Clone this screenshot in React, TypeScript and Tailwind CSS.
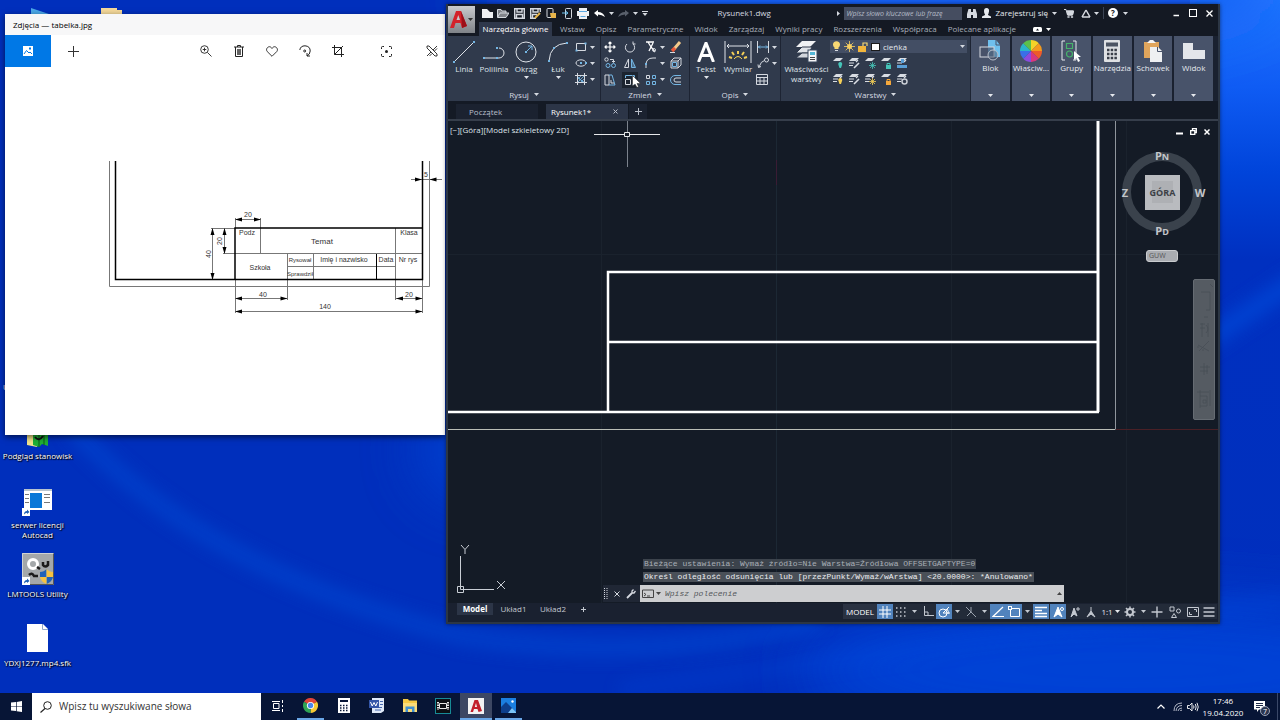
import React from "react";

type Kids = { children?: React.ReactNode };

function Ico({ s = 14, w, h, vb, children }: Kids & { s?: number; w?: number; h?: number; vb?: string }) {
  const ww = w ?? s;
  const hh = h ?? s;
  return (
    <svg width={ww} height={hh} viewBox={vb ?? `0 0 ${ww} ${hh}`} fill="none" stroke="currentColor" aria-hidden="true" className="block shrink-0">
      {children}
    </svg>
  );
}

function Caret() {
  return (
    <Ico w={5} h={3}>
      <path d="M0 0H5L2.500 3Z" fill="currentColor" stroke="none" />
    </Ico>
  );
}

function Btn({ label, className = "", children }: Kids & { label: string; className?: string }) {
  return (
    <button type="button" aria-label={label} title={label} className={`flex shrink-0 items-center justify-center ${className}`}>
      {children}
    </button>
  );
}

/* ---------- Wallpaper ---------- */

function Wallpaper() {
  return (
    <svg className="absolute inset-0 h-full w-full" viewBox="0 0 1280 720" preserveAspectRatio="none" aria-hidden="true">
      <defs>
        <filter id="b1" x="-30%" y="-60%" width="160%" height="220%"><feGaussianBlur stdDeviation="9" /></filter>
        <filter id="b2" x="-60%" y="-120%" width="220%" height="340%"><feGaussianBlur stdDeviation="30" /></filter>
        <linearGradient id="rt" x1="0" y1="0" x2="0" y2="1">
          <stop offset="0" stopColor="#2176ff" />
          <stop offset="0.12" stopColor="#0f5cf4" />
          <stop offset="0.24" stopColor="#0044da" />
          <stop offset="0.36" stopColor="#0030c0" />
          <stop offset="1" stopColor="#002fbc" />
        </linearGradient>
      </defs>
      <rect width="1280" height="720" fill="#002fbc" />
      <rect x="1190" width="90" height="720" fill="url(#rt)" />
      <ellipse cx="880" cy="-10" rx="400" ry="60" fill="#1560f4" filter="url(#b2)" />
      <ellipse cx="480" cy="450" rx="60" ry="50" fill="#0050e0" opacity="0.6" filter="url(#b2)" />
      <ellipse cx="1130" cy="670" rx="330" ry="70" fill="#0046dc" opacity="0.8" filter="url(#b2)" />
      <path d="M70 425Q200 570 460 636Q640 665 820 622" stroke="#0054de" strokeWidth="13" fill="none" opacity="0.55" filter="url(#b1)" />
      <path d="M1200 345L1300 278" stroke="#0054e4" strokeWidth="16" opacity="0.6" filter="url(#b1)" />
      <path d="M620 690Q900 650 1290 600" stroke="#0050e4" strokeWidth="10" fill="none" opacity="0.35" filter="url(#b1)" />
    </svg>
  );
}

/* ---------- Desktop icons ---------- */

function ShortcutArrow() {
  return (
    <g>
      <rect x="0" y="19" width="8" height="8" fill="#fff" />
      <path d="M2 25.500Q2 22 5 22V20.500L7.500 23L5 25V23.700Q3.500 23.700 2 25.500Z" fill="#1d5fb4" />
    </g>
  );
}

function DesktopItem({ label, children }: Kids & { label: string }) {
  return (
    <button type="button" className="flex h-[69px] w-[75px] flex-col items-center text-[8px] leading-[10px] text-white [text-shadow:1px_1px_1px_#000,0_0_2px_#000]">
      <span className="mb-1 flex h-8 items-end justify-center">{children}</span>
      <span className="text-center whitespace-pre">{label}</span>
    </button>
  );
}

function DesktopIcons() {
  return (
    <>
      <div className="absolute top-2 left-[31px] flex w-[91px] justify-between">
        <Ico w={18} h={8}><path d="M0 0L18 6V8H0Z" fill="#4aa8e8" stroke="none" /></Ico>
        <Ico w={21} h={8}><path d="M0 0H16V2H21V8H0Z" fill="#f4d89a" stroke="none" /></Ico>
      </div>
      <div className="absolute top-[346px] left-0 flex flex-col">
        <div className="flex h-[69px] flex-col justify-center pt-3 pl-[3px] text-[8px] leading-[10px] text-white">U</div>
        <DesktopItem label="Podgląd stanowisk">
          <Ico w={21} h={32}>
            <g stroke="none">
              <path d="M0 6L10 3V32L0 30Z" fill="#f2e38c" />
              <path d="M6 8H21V31L15 29L12 32L6 30Z" fill="#1fb035" />
              <path d="M12 12V32M17 10V30" stroke="#0a5a18" />
              <path d="M8 22Q12 27 16 21" stroke="#111" strokeWidth="2" fill="none" />
            </g>
          </Ico>
        </DesktopItem>
        <DesktopItem label={"serwer licencji\nAutocad"}>
          <Ico w={31} h={27}>
            <g stroke="none">
              <rect x="2" y="0" width="28" height="21" fill="#fff" />
              <rect x="2" y="0" width="28" height="2" fill="#b8c4cf" />
              <rect x="8" y="4" width="12" height="15" fill="#0a78d8" />
              <path d="M3 5.500H7M3 9.500H7M3 13.500H7M22 5.500H28M22 8.500H28M22 13.500H28" stroke="#777" />
              <ShortcutArrow />
            </g>
          </Ico>
        </DesktopItem>
        <DesktopItem label="LMTOOLS Utility">
          <Ico w={32} h={32}>
            <g stroke="none">
              <rect width="32" height="32" fill="#a4a8aa" />
              <path d="M0.500 31.500V0.500H31.500" stroke="#d0d2d3" />
              <path d="M31.500 0.500V31.500H0.500" stroke="#555" />
              <circle cx="11" cy="11" r="4.500" stroke="#fff" strokeWidth="3" fill="none" />
              <path d="M15 14L18 16M21 9V12Q23 15 26 12V8M7 22Q10 19 12 23H16" stroke="#1b1b1b" strokeWidth="2.500" fill="none" />
              <path d="M18 19Q22 19 24.500 16V24H18Z M24.500 24H31Q30 29 24.500 31Z" fill="#1f62b8" />
              <path d="M24.500 16Q27 19 31 19V24H24.500Z M18 24H24.500V31Q19 29 18 24Z" fill="#f5c242" />
              <g transform="translate(0 5)"><ShortcutArrow /></g>
            </g>
          </Ico>
        </DesktopItem>
        <DesktopItem label="YDXJ1277.mp4.sfk">
          <Ico w={21} h={30}>
            <g stroke="none">
              <path d="M0 0H16L21 5V28H0Z" fill="#fff" />
              <path d="M15.500 0V5.500H21" stroke="#8fa6c8" fill="none" />
            </g>
          </Ico>
        </DesktopItem>
      </div>
    </>
  );
}

/* ---------- Photos window ---------- */

function Arrow({ x, y, r }: { x: number; y: number; r: number }) {
  return <path d="M0 0L-7 -2V2Z" fill="#000" transform={`translate(${x} ${y}) rotate(${r})`} />;
}

function TitleBlockDrawing() {
  return (
    <svg viewBox="5 67 440 368" className="min-h-0 w-full flex-1" fontFamily="'Liberation Sans', Arial, sans-serif" fontSize="7" fill="#333" role="img" aria-label="tabelka">
      <g stroke="#777" fill="none">
        <path d="M109.500 161V286.500H429.500V161" />
        <path d="M235.500 218V228M260.500 218V253.500M235 253.500H422M287.500 253.500V300M313.500 254V280M287 266.500H396M395.500 228V300M211 228.500H235M223 253.500H235M235.500 280V313M422.500 280V313" />
        <path d="M235 219.500H260M212.500 228V280M224.500 228V253M235 298.500H287M396 298.500H422M235 311.500H422M411 179.500H442" />
      </g>
      <g stroke="#000" fill="none">
        <path d="M115.500 161V279.500H422.500V161" strokeWidth="1.500" />
        <path d="M235 280V228H422" strokeWidth="1.500" />
        <path d="M376.500 254V280" />
      </g>
      <Arrow x={235} y={219.500} r={180} /><Arrow x={261} y={219.500} r={0} />
      <Arrow x={212.500} y={228} r={-90} /><Arrow x={212.500} y={280} r={90} />
      <Arrow x={224.500} y={228} r={-90} /><Arrow x={224.500} y={254} r={90} />
      <Arrow x={235} y={298.500} r={180} /><Arrow x={287.500} y={298.500} r={0} />
      <Arrow x={396} y={298.500} r={180} /><Arrow x={422.500} y={298.500} r={0} />
      <Arrow x={235} y={311.500} r={180} /><Arrow x={422.500} y={311.500} r={0} />
      <Arrow x={422} y={179.500} r={0} /><Arrow x={429.500} y={179.500} r={180} />
      <g textAnchor="middle">
        <text x="248" y="217">20</text>
        <text x="247" y="235">Podz</text>
        <text x="322" y="244" fontSize="8">Temat</text>
        <text x="409" y="235">Klasa</text>
        <text x="260" y="270">Szkoła</text>
        <text x="300" y="262" fontSize="6">Rysował</text>
        <text x="300" y="276" fontSize="6">Sprawdził</text>
        <text x="344" y="262">Imię i nazwisko</text>
        <text x="386" y="262">Data</text>
        <text x="408" y="262">Nr rys</text>
        <text x="263" y="297">40</text>
        <text x="409" y="297">20</text>
        <text x="325" y="309">140</text>
        <text x="426" y="177">5</text>
        <text transform="translate(211 254) rotate(-90)">40</text>
        <text transform="translate(222 241) rotate(-90)">20</text>
      </g>
    </svg>
  );
}

function PhotosWindow() {
  return (
    <section aria-label="Zdjęcia" className="absolute top-[14px] left-[5px] flex h-[421px] w-[440px] flex-col bg-white text-black shadow-[0_2px_6px_rgba(0,0,0,0.6)]">
      <header className="flex h-[21px] items-center bg-[#f7f7f8] px-2 text-[8px]">Zdjęcia — tabelka.jpg</header>
      <div className="flex h-8 items-stretch">
        <Btn label="Kolekcja" className="w-[46px] bg-[#0078e6] text-white">
          <Ico w={10} h={10}>
            <rect width="10" height="10" fill="#fff" stroke="none" />
            <path d="M1 8L3.500 4.500L6 7L7 6L9 8" stroke="#0078e6" />
            <rect x="6" y="1.500" width="2" height="2" fill="#0078e6" stroke="none" />
          </Ico>
        </Btn>
        <Btn label="Dodaj" className="w-[45px] text-[#333]">
          <Ico s={11}><path d="M5.500 0V11M0 5.500H11" /></Ico>
        </Btn>
        <div className="ml-auto flex gap-4 text-[#222]">
          <div className="flex">
            <Btn label="Powiększ" className="w-[33px]">
              <Ico s={12}><circle cx="4.500" cy="4.500" r="3.800" strokeWidth="0.900" /><path d="M7.500 7.500L11.500 11.500M4.500 2.700V6.300M2.700 4.500H6.300" strokeWidth="0.900" /></Ico>
            </Btn>
            <Btn label="Usuń" className="w-[33px]">
              <Ico w={10} h={12}><path d="M0 2H10M3.500 2V0.500H6.500V2M1.500 2V11.500H8.500V2" /><path d="M4 4V10M6 4V10" strokeWidth="1.400" /></Ico>
            </Btn>
            <Btn label="Ulubione" className="w-[33px]">
              <Ico w={12} h={11}><path d="M6 10.300L1.200 5.500C-0.500 3.300 1.500 0.700 3.500 0.700C5 0.700 6 2.500 6 2.500C6 2.500 7 0.700 8.500 0.700C10.500 0.700 12.500 3.300 10.800 5.500Z" strokeWidth="0.900" /></Ico>
            </Btn>
            <Btn label="Obróć" className="w-[33px]">
              <Ico s={12}><path d="M0.800 5Q1.500 0.800 6 0.800Q11.200 1.200 11.200 6Q11 9.500 8 11M11 11H8V8" /><circle cx="5.700" cy="6" r="1" /></Ico>
            </Btn>
            <Btn label="Przytnij" className="w-[33px]">
              <Ico s={12}><path d="M2.500 0V9.500H12M0 2.500H9.500V12M2.500 9.500L11 1" /></Ico>
            </Btn>
          </div>
          <Btn label="Dopasuj" className="w-[33px]">
            <Ico s={11}><path d="M0.500 3V1.500Q0.500 0.500 1.500 0.500H3M8 0.500H9.500Q10.500 0.500 10.500 1.500V3M10.500 8V9.500Q10.500 10.500 9.500 10.500H8M3 10.500H1.500Q0.500 10.500 0.500 9.500V8" /><circle cx="5.500" cy="5.500" r="1.500" fill="currentColor" stroke="none" /></Ico>
          </Btn>
          <Btn label="Edytuj" className="w-[26px]">
            <Ico s={12}><path d="M1 1L3 1L11 9V11L9 11L1 3ZM11 1L7 5M5 7L1 11M11 3.500L8.500 6M6 8.500L3.500 11" strokeWidth="0.900" /></Ico>
          </Btn>
        </div>
      </div>
      <TitleBlockDrawing />
    </section>
  );
}

/* ---------- CAD: title bar and tabs ---------- */

function CadHeader() {
  return (
    <header className="flex h-8 bg-[#141923] text-[#d5d9e0]">
      <Btn label="Menu aplikacji" className="mt-[2px] h-[27px] w-[27px] gap-[1px] bg-gradient-to-b from-[#c9cbce] to-[#7f8388]">
        <Ico w={17} h={18}>
          <g stroke="none">
            <path d="M6 0H11L17 15L12 17L10.500 12H5.500L4 17H0Z" fill="#d3222a" />
            <path d="M8.300 4L10 9H6.500Z" fill="#c9cbce" />
            <path d="M11 0L17 15L12 17Z" fill="#9c1019" />
          </g>
        </Ico>
        <span className="text-[#333]"><Caret /></span>
      </Btn>
      <div className="flex min-w-0 flex-1 flex-col">
        <div className="flex h-[18px] items-center">
          <div className="flex items-center pl-1">
            <Btn label="Nowy" className="w-4"><Ico w={11} h={10}><path d="M0 1H5L8 4H11V10H0Z" fill="#eef0f3" stroke="none" /></Ico></Btn>
            <Btn label="Otwórz" className="w-4"><Ico w={12} h={10}><path d="M0.500 9V1.500H4L5 3H9V5M0.500 9.500L3 5H12L9 9.500Z" fill="#eef0f3" fillOpacity="0.500" /></Ico></Btn>
            <Btn label="Zapisz" className="w-4"><Ico s={11}><path d="M0.700 0.700H10.300V10.300H0.700ZM3 0.700V4H8V0.700M2.500 10V6.500H8.500V10" strokeWidth="1.400" /></Ico></Btn>
            <Btn label="Zapisz jako" className="w-4"><Ico s={11}><path d="M6 10.300H0.700V0.700H10.300V4M3 0.700V4H8V0.700M2.500 10V6.500H7" strokeWidth="1.400" /><path d="M5 10L10 5" stroke="#e8b54a" strokeWidth="2" /></Ico></Btn>
            <Btn label="Otwórz z urządzenia" className="w-4"><Ico s={11}><rect x="1" y="0.500" width="6" height="9" rx="1" /><path d="M4 5H10V10H5Z" fill="#e8b54a" stroke="none" /></Ico></Btn>
            <Btn label="Zapisz na urządzeniu" className="w-4"><Ico s={11}><rect x="3.500" y="0.500" width="6" height="10" rx="1" /><path d="M0 5H5M3.500 3L6 5L3.500 7" stroke="#6fc3f0" /></Ico></Btn>
            <Btn label="Drukuj" className="w-4"><Ico w={12} h={11}><path d="M2 0H10V3H12V8H10V11H2V8H0V3H2Z" fill="#eef0f3" stroke="none" /><path d="M2 3.500H10M3.500 8.500H8.500" stroke="#5aa7e0" /></Ico></Btn>
            <Btn label="Cofnij" className="w-4"><Ico w={11} h={7}><path d="M0 3L4 0V2Q9 2 11 7Q8 4.500 4 4.500V6.500Z" fill="#fff" stroke="none" /></Ico></Btn>
            <Btn label="Lista cofania" className="w-2"><Caret /></Btn>
            <Btn label="Ponów" className="w-4 text-[#59606c]"><Ico w={11} h={7}><path d="M11 3L7 0V2Q2 2 0 7Q3 4.500 7 4.500V6.500Z" fill="currentColor" stroke="none" /></Ico></Btn>
            <Btn label="Lista ponawiania" className="w-2"><Caret /></Btn>
            <Btn label="Dostosuj pasek" className="w-3"><Ico w={6} h={5}><path d="M0 0.500H6" /><path d="M0.500 2H5.500L3 5Z" fill="currentColor" stroke="none" /></Ico></Btn>
          </div>
          <h1 className="flex-1 text-center text-[8px]">Rysunek1.dwg</h1>
          <div className="flex items-center gap-1">
            <Ico w={3} h={5}><path d="M0 0L3 2.500L0 5Z" fill="currentColor" stroke="none" /></Ico>
            <input aria-label="Szukaj" placeholder="Wpisz słowo kluczowe lub frazę" className="h-[13px] w-[118px] bg-[#454d60] px-[2px] text-[7px] italic placeholder:text-[#b4bac5]" />
            <Btn label="Wyszukaj" className="w-3"><Ico w={10} h={9}><path d="M0 5L1.500 0H4V3H6V0H8.500L10 5V9H6V6H4V9H0Z" fill="currentColor" stroke="none" /></Ico></Btn>
            <button type="button" className="flex items-center gap-1 text-[8px] whitespace-nowrap text-[#e6e9ee]">
              <Ico w={9} h={10}><path d="M4.500 0Q7.500 0 7 3.500Q6.500 6 6 6.500V7L9 8.500V10H0V8.500L3 7V6.500Q2 5 2 3Q2 0 4.500 0Z" fill="currentColor" stroke="none" /></Ico>
              Zarejestruj się
            </button>
            <Btn label="Menu konta"><Caret /></Btn>
            <Btn label="Sklep" className="w-4"><Ico w={10} h={9}><path d="M0 0.500H2L3.500 6H8.500L9.500 2H3" /><path d="M3 2H9.500L8.500 6H3.800Z" fill="currentColor" /><circle cx="4.500" cy="8" r="0.800" /><circle cx="8" cy="8" r="0.800" /></Ico></Btn>
            <Btn label="Autodesk" className="gap-[3px]"><Ico w={10} h={9}><path d="M5 1L9 8M5 1L1 8M1 8H9" strokeWidth="1.500" /></Ico><Caret /></Btn>
            <span className="h-3 w-px bg-[#3b4454]" />
            <Btn label="Pomoc" className="gap-[5px]">
              <span className="flex h-[10px] w-[10px] items-center justify-center rounded-full bg-white text-[8px] font-bold text-[#141923]">?</span>
              <Caret />
            </Btn>
          </div>
          <div className="ml-10 flex items-center text-white">
            <Btn label="Minimalizuj" className="w-4"><Ico s={8}><path d="M1.500 6.500H7" strokeWidth="1.500" /></Ico></Btn>
            <Btn label="Maksymalizuj" className="w-[17px]"><Ico s={8}><rect x="0.500" y="0.500" width="7" height="7" /></Ico></Btn>
            <Btn label="Zamknij" className="mr-px w-4"><Ico s={7}><path d="M0.500 0.500L6.500 6.500M6.500 0.500L0.500 6.500" strokeWidth="1.300" /></Ico></Btn>
          </div>
        </div>
        <nav className="flex h-[14px] items-center pl-1 text-[8px] whitespace-nowrap text-[#a9afba]">
          <button type="button" className="mr-2 h-full w-[73px] bg-[#2f384b] text-white">Narzędzia główne</button>
          <div className="flex gap-[11px]">
            {["Wstaw", "Opisz", "Parametryczne", "Widok", "Zarządzaj", "Wyniki pracy", "Rozszerzenia", "Współpraca", "Polecane aplikacje"].map((t) => (
              <button type="button" key={t}>{t}</button>
            ))}
          </div>
          <Btn label="Zwiń wstążkę" className="ml-[17px] gap-1 text-white">
            <Ico w={9} h={5}><rect width="9" height="5" rx="1.500" fill="currentColor" stroke="none" /><path d="M3 3.500H6L4.500 1.500Z" fill="#141923" stroke="none" /></Ico>
            <Caret />
          </Btn>
        </nav>
      </div>
    </header>
  );
}

/* ---------- CAD: ribbon ---------- */

const B = "#74b6e4";

function BigTool({ label, caret, className = "", children }: Kids & { label: string; caret?: boolean; className?: string }) {
  return (
    <button type="button" className={`flex shrink-0 flex-col items-center text-[8px] leading-[10px] text-[#dfe3e9] ${className}`}>
      <span className="flex h-[25px] items-center justify-center">{children}</span>
      <span className="whitespace-pre">{label}</span>
      {caret && <span className="mt-[2px]"><Caret /></span>}
    </button>
  );
}

function Panel({ title, className = "", children }: Kids & { title: string; className?: string }) {
  return (
    <section className={`flex shrink-0 flex-col border-r border-[#1d2433] bg-[#303a4c] text-[#d5d9e0] ${className}`}>
      <div className="flex flex-1 pt-[3px]">{children}</div>
      <button type="button" className="flex h-[13px] items-center justify-center gap-[5px] text-[8px]">{title}<Caret /></button>
    </section>
  );
}

function Small({ label, caret, active, children }: Kids & { label: string; caret?: boolean; active?: boolean }) {
  return (
    <Btn label={label} className={`h-4 ${caret ? "w-[26px] gap-[3px]" : "w-4"} ${active ? "bg-[#1c2430]" : ""}`}>
      <Ico s={12}>{children}</Ico>
      {caret && <Caret />}
    </Btn>
  );
}

const sheet = "M4 1H11L8 4H1Z";

function LayerTool({ label, mark, stack, badge }: { label: string; mark: string; stack?: boolean; badge: React.ReactNode }) {
  return (
    <Small label={label}>
      <path d={sheet} fill="#d9dde3" stroke="none" />
      {stack && <path d="M1 6H6M1 8.500H5M10 3L8 5" stroke="#d9dde3" strokeWidth="1.200" />}
      <g stroke={mark} fill={mark}>{badge}</g>
    </Small>
  );
}

const bulb = <path d="M6.500 8A2 2 0 1 1 10 8L9 11H7.500Z" stroke="none" />;
const pen = <path d="M6 11L11 6" fill="none" strokeWidth="1.600" />;
const sun = <path d="M8.500 5V12M5 8.500H12M6 6L11 11M11 6L6 11" fill="none" strokeWidth="0.800" />;
const lock = <><rect x="6" y="8" width="5" height="4" stroke="none" /><path d="M7 8V6.500H10V8" fill="none" /></>;
const ring = <circle cx="8.500" cy="8.500" r="2.500" fill="none" strokeWidth="1.500" />;

function Collapsed({ title, children }: Kids & { title: string }) {
  return (
    <button type="button" className="flex min-w-0 flex-1 flex-col items-center bg-[#48536a] pt-[2px] pb-1 text-[8px] leading-[10px] text-[#e6e9ee]">
      <span className="flex h-[25px] items-center">{children}</span>
      <span>{title}</span>
      <span className="mt-auto"><Caret /></span>
    </button>
  );
}

function Ribbon() {
  const sq = (x: number, y: number) => <rect x={x - 1} y={y - 1} width="2" height="2" fill={B} stroke="none" />;
  const wedge = ["#f5d327", "#f39a1e", "#ee5a2a", "#d9377d", "#8b4be0", "#3a6fe8", "#2bb5c9", "#5cc04a"];
  return (
    <div className="flex h-[65px] bg-[#1a2130]">
      <Panel title="Rysuj" className="w-[153px]">
        <BigTool label="Linia" className="w-8"><Ico s={22}><path d="M1 21L21 1" />{sq(1, 21)}{sq(21, 1)}</Ico></BigTool>
        <BigTool label="Polilinia" className="w-7"><Ico s={22}><path d="M1 17H16A5 5 0 0 0 16 7" />{sq(1, 17)}{sq(14, 17)}{sq(14, 7)}</Ico></BigTool>
        <BigTool label="Okrąg" caret className="w-9"><Ico s={22}><circle cx="11" cy="11" r="10" /><path d="M11 11L17 5M13 5H17V9" stroke={B} />{sq(11, 11)}</Ico></BigTool>
        <BigTool label="Łuk" caret className="w-7"><Ico s={22}><path d="M2 20Q3 3 20 2" />{sq(2, 20)}{sq(7, 7)}{sq(20, 2)}</Ico></BigTool>
        <div className="flex flex-col">
          <Small label="Prostokąt" caret><path d="M1.500 2.500H10.500V9.500H1.500Z" />{sq(1.5, 9.5)}{sq(10.5, 2.5)}</Small>
          <Small label="Elipsa" caret><ellipse cx="6" cy="6" rx="5" ry="3.200" />{sq(6, 6)}{sq(11, 6)}</Small>
          <Small label="Kreskowanie" caret><path d="M2.500 0V12M9.500 0V12M0 2.500H12M0 9.500H12" /><path d="M3 6L6 3M3 9L9 3M6 9L9 6M4 6L9 9M3 4L8 9" stroke={B} strokeWidth="0.800" /></Small>
        </div>
      </Panel>
      <Panel title="Zmień" className="w-[89px]">
        <div className="ml-px grid grid-cols-[20px_20px_26px_20px]">
          <Small label="Przesuń"><path d="M6 1V11M1 6H11M4.500 2.500L6 1L7.500 2.500M4.500 9.500L6 11L7.500 9.500M2.500 4.500L1 6L2.500 7.500M9.500 4.500L11 6L9.500 7.500" stroke="#fff" strokeWidth="1.200" /></Small>
          <Small label="Obrót"><path d="M3 3A4.600 4.600 0 1 0 9 3M9 3V0.500M9 3H11.500" /></Small>
          <Small label="Utnij" caret><path d="M1 1H9M3 1L6 6L10 11M8 2L6 6L4 10" stroke="#fff" strokeWidth="1.300" /><circle cx="9" cy="9" r="1.500" /></Small>
          <Small label="Wymaż"><path d="M4 8L10 1" stroke="#f3c98b" strokeWidth="3" /><path d="M2 10L5 7" stroke="#e8583a" strokeWidth="3.500" /><path d="M0 11.500H5" /></Small>
          <Small label="Kopiuj"><circle cx="2.500" cy="2.500" r="1.700" /><circle cx="4" cy="8.500" r="2" stroke={B} /><circle cx="9.500" cy="8.500" r="2" stroke={B} /><path d="M6 2.500H9.500V5M8 4L9.500 5.500L11 4" /></Small>
          <Small label="Lustro"><path d="M4.500 2V10.500H0.500Z" /><path d="M7.500 2V10.500H11.500Z" stroke={B} fill={B} fillOpacity="0.400" /></Small>
          <Small label="Zaokrąglij" caret><path d="M1 11V8Q1 1 8 1H11" />{sq(1, 7)}</Small>
          <Small label="Rozbij"><path d="M1 4H8V11H1ZM1 4L4 1H11V8L8 11M8 4L11 1" /><path d="M2.500 5.500H6.500V9.500H2.500Z" stroke={B} /></Small>
          <Small label="Rozciągnij"><path d="M1 1H5V11H1Z" /><path d="M5 1H8L11 11H5" stroke={B} /><path d="M7 6V9H10" /></Small>
          <Small label="Skala" active><path d="M1.500 5.500H6.500V10.500H1.500Z" /><path d="M1.500 4V1.500H10.500V10.500H8" stroke={B} /></Small>
          <Small label="Szyk" caret><path d="M1.500 1.500H4.500V4.500H1.500Z" /><path d="M7.500 1.500H10.500V4.500H7.500ZM1.500 7.500H4.500V10.500H1.500ZM7.500 7.500H10.500V10.500H7.500Z" stroke={B} /></Small>
          <Small label="Odsunięcie"><path d="M11 1.500H5A4.500 4.500 0 0 0 5 10.500H11" stroke={B} /><path d="M11 4H6A2 2 0 0 0 6 8H11" /></Small>
        </div>
      </Panel>
      <Panel title="Opis" className="w-[91px]">
        <BigTool label="Tekst" caret className="w-8"><Ico w={18} h={20}><path d="M1.500 20L9 1L16.500 20M4 13.500H14" stroke="#fff" strokeWidth="3" /></Ico></BigTool>
        <BigTool label="Wymiar" className="w-8"><Ico w={28} h={22}><path d="M1 0V22M27 0V22M3 5H25M5 3L3 5L5 7M23 3L25 5L23 7" /><path d="M8 17L5 16M10 14L8 11M14 13V10M18 14L20 11M20 17L23 16" stroke="#f5cf57" strokeWidth="2" /><path d="M10 18Q14 13 18 18" stroke="#f5cf57" /></Ico></BigTool>
        <div className="flex flex-col">
          <Small label="Liniowy" caret><path d="M0.500 0V12M11.500 0V12" /><path d="M1 6H11M3 4.500L1.500 6L3 7.500M9 4.500L10.500 6L9 7.500" stroke={B} /></Small>
          <Small label="Linia odniesienia" caret><circle cx="9.500" cy="3" r="2" /><path d="M7.500 3.500Q4 4 2 10M1 7.500L1.500 10.500L4 9.500" /></Small>
          <Small label="Tabela"><path d="M0.500 1.500H11.500V11.500H0.500ZM0.500 4.500H11.500M0.500 8H11.500M4 4V11M8 4V11" /></Small>
        </div>
      </Panel>
      <Panel title="Warstwy" className="w-[190px]">
        <BigTool label={"Właściwości\nwarstwy"} className="ml-1 w-[43px]">
          <Ico s={23}><g stroke="none"><path d="M7 1H21L15 7H1Z" fill="#f1f2f4" /><path d="M7 7H17L14 13H1Z" fill="#e0e3e8" stroke="#303a4c" /><path d="M7 13H14V18H1Z" fill="#d2d6dc" stroke="#303a4c" /><rect x="13" y="10" width="9" height="12" fill="#f4f6f8" stroke="#39495e" /><rect x="15" y="12" width="5" height="3" fill="#54b7d6" /><path d="M15 17.500H20M15 19.500H20" stroke="#444" /></g></Ico>
        </BigTool>
        <div className="flex flex-col pt-px pl-[2px]">
          <div className="flex h-[13px] w-[137px] items-center gap-[3px] bg-[#434e64] px-[2px]">
            <Ico w={9} h={11}><path d="M2.500 8V6.500A3.500 3.500 0 1 1 6.500 6.500V8Z" fill="#f7d774" stroke="none" /><path d="M3 9.500H6" /></Ico>
            <Ico s={11}><circle cx="5.500" cy="5.500" r="2.500" fill="#f7cf62" stroke="none" /><path d="M5.500 0V11M0 5.500H11M1.700 1.700L9.300 9.300M9.300 1.700L1.700 9.300" stroke="#f7cf62" strokeWidth="0.800" /></Ico>
            <Ico s={10}><rect x="0" y="4" width="8" height="6" fill="#f2b63c" stroke="none" /><path d="M5 4V1H9V4" stroke="#f7d774" strokeWidth="1.200" /></Ico>
            <span className="h-2 w-[9px] shrink-0 border border-[#1a1a1a] bg-white" />
            <select aria-label="Warstwa" className="min-w-0 flex-1 appearance-none bg-transparent text-[8px] leading-[13px] text-[#e6e9ee]">
              <option>cieńka</option>
            </select>
            <span className="pointer-events-none"><Caret /></span>
          </div>
          <div className="mt-[2px] grid w-20 grid-cols-5">
            <LayerTool label="Wyłącz" mark="#45c4b8" badge={bulb} />
            <LayerTool label="Izoluj" mark="#d9dde3" stack badge={pen} />
            <LayerTool label="Zablokuj wyświetlanie" mark="#45c4b8" badge={sun} />
            <LayerTool label="Zablokuj" mark="#45c4b8" badge={lock} />
            <LayerTool label="Ustaw aktualną" mark="#5a9fd6" stack badge={<path d="M1 8H11V11H1ZM5 2H8V6H5Z" stroke="none" />} />
            <LayerTool label="Włącz" mark="#f5cf57" stack badge={bulb} />
            <LayerTool label="Cofnij izolację" mark="#d9dde3" stack badge={pen} />
            <LayerTool label="Odmroź" mark="#f5cf57" stack badge={sun} />
            <LayerTool label="Odblokuj" mark="#f5a83c" badge={lock} />
            <LayerTool label="Dopasuj warstwę" mark="#c9cdd4" stack badge={ring} />
          </div>
        </div>
      </Panel>
      <div className="mr-[5px] flex min-w-0 flex-1 gap-[2px]">
        <Collapsed title="Blok"><Ico s={22}><g stroke="none"><path d="M9 0H17L21 5V17H9Z" fill="#6fc0ee" /><rect x="1" y="7" width="14" height="10" fill="#48536a" fillOpacity="0.700" stroke="#d5d9e0" /><circle cx="14" cy="15" r="5" fill="#48536a" fillOpacity="0.500" stroke="#b9bfca" /><path d="M17 0V5H21" stroke="#48536a" fill="none" /></g></Ico></Collapsed>
        <Collapsed title="Właściw...">
          <Ico s={22}>
            {wedge.map((c, i) => (
              <path key={c} d="M11 11L11 0A11 11 0 0 1 18.780 3.220Z" fill={c} stroke="none" transform={`rotate(${i * 45} 11 11)`} />
            ))}
          </Ico>
        </Collapsed>
        <Collapsed title="Grupy"><Ico s={22}><path d="M4 1H1V20H4M12 1H15V20H12" /><path d="M5.500 3.500H11.500V8.500H5.500Z" stroke="#47b36b" strokeWidth="1.200" /><circle cx="8.500" cy="14" r="3" stroke="#47b36b" strokeWidth="1.200" /><path d="M13 11L20 17H17L19 21L17 22L15.500 18L13 20Z" fill="#fff" stroke="none" /></Ico></Collapsed>
        <Collapsed title="Narzędzia"><Ico w={16} h={22}><rect width="16" height="22" rx="1" fill="#dfe1e4" stroke="none" /><rect x="2" y="2.500" width="12" height="4" fill="#4d5564" stroke="none" /><path d="M3 10H13M3 14H13M3 18H13" stroke="#3a3f49" strokeWidth="2.500" strokeDasharray="2.500 1.200" /></Ico></Collapsed>
        <Collapsed title="Schowek"><Ico w={18} h={22}><g stroke="none"><path d="M0 2H15V18H0Z" fill="#e0a55c" /><path d="M3 3L6 0H9L12 3Z" fill="#f4f4f4" /><path d="M6 7H14L18 11V22H6Z" fill="#eef0f2" /><path d="M13.500 7V11.500H18" stroke="#48536a" fill="none" /></g></Ico></Collapsed>
        <Collapsed title="Widok"><Ico w={22} h={16}><path d="M0 0H10V7H22V16H0Z" fill="#e4e6ea" stroke="none" /></Ico></Collapsed>
      </div>
    </div>
  );
}

function FileTabs() {
  return (
    <nav className="flex h-5 items-end border-b-2 border-[#363e4b] bg-[#141a25] pl-2 text-[8px] text-[#b9bfca]">
      <button type="button" className="h-[15px] w-[82px] bg-[#1b2230] pl-[13px] text-left">Początek</button>
      <div className="ml-2 flex h-[15px] w-[82px] items-center justify-between bg-[#2c3547] pr-[10px] pl-[5px] text-white">
        <button type="button">Rysunek1*</button>
        <Btn label="Zamknij kartę" className="text-[#b9bfca]"><Ico s={5}><path d="M0.500 0.500L4.500 4.500M4.500 0.500L0.500 4.500" /></Ico></Btn>
      </div>
      <Btn label="Nowa karta" className="ml-px h-[15px] w-[18px] bg-[#1b2230]"><Ico s={7}><path d="M3.500 0V7M0 3.500H7" /></Ico></Btn>
    </nav>
  );
}

/* ---------- CAD: drawing area ---------- */

function Drawing() {
  return (
    <svg className="absolute inset-0 h-full w-full" fill="none" aria-hidden="true">
      <g transform="translate(-448 -121)">
        <path d="M601.500 121V610M951.500 121V610M1126.500 121V610M448 254.500H1218" stroke="#1a222d" />
        <path d="M776.500 121V610" stroke="#1c2834" />
        <path d="M776.500 160V185" stroke="#3a1c34" />
        <path d="M1116 429.500H1218" stroke="#4a2026" />
        <path d="M1115.500 121V429.500" stroke="#8f959c" />
        <path d="M448 429.500H1115" stroke="#b9bdb6" />
        <g stroke="#fff" strokeWidth="2.500">
          <path d="M1098 121V412" strokeWidth="3" />
          <path d="M448 412H1099M608 412V272H1098M608 342H1098" />
        </g>
        <g stroke="#e6e8ea">
          <path d="M594 134.500H624M630 134.500H660M624.500 132.500H629.500V136.500H624.500Z" />
          <path d="M627.500 121V132M627.500 137V167" stroke="#7b828c" />
          <path d="M460.500 556V589.500H494M457.500 586.500H463.500V592.500H457.500Z" stroke="#c9ced5" />
          <path d="M461 545L465 549.500L469 545M465 549.500V554M497 581L505 589M505 581L497 589" stroke="#c9ced5" />
        </g>
      </g>
    </svg>
  );
}

function ViewCube() {
  return (
    <div className="flex w-[90px] flex-col items-center">
      <svg width="90" height="96" viewBox="0 0 90 96" role="img" aria-label="ViewCube" fontFamily="'Open Sans', sans-serif" fontWeight="bold" fontSize="11" fill="#c3c6ca" textAnchor="middle">
        <circle cx="44" cy="46" r="35.500" stroke="#3a424c" strokeWidth="9" fill="none" />
        <rect x="27" y="29" width="35" height="35" fill="#b9bbbf" />
        <rect x="34" y="35" width="21" height="22" fill="#aeb0b4" />
        <text x="44.500" y="50" fontSize="9" fill="#3c4046">GÓRA</text>
        <text x="44" y="14">P<tspan fontSize="9">N</tspan></text>
        <text x="44" y="89">P<tspan fontSize="9">D</tspan></text>
        <text x="7" y="51">Z</text>
        <text x="82" y="51">W</text>
      </svg>
      <button type="button" className="mt-2 mr-[2px] h-3 w-8 rounded-[3px] border border-[#c9cbce] bg-[#a9acb1] pl-[2px] text-left text-[7px] leading-[10px] text-[#555]">GUW</button>
    </div>
  );
}

function NavBar() {
  return (
    <div className="h-[141px] w-[22px] rounded-[2px] border border-[#666c73] bg-[#555b62] text-[#484e55]">
      <Ico w={20} h={139} vb="1 1 20 139">
        <path d="M17 5L20 8M8 13H17V31H13M11 38H15M7 45H12M7 49H12M9 44V58M13 46Q17 50 13 54M15 44V58M5 66L16 72M16 62L6 72M4 68H6M9 71H11M7 88H17M11 84V96M7 92H15M14 86V95M7 111V129M7 117H14V127H7M10 121H13V124H10ZM17 111V127M4 113H16" strokeWidth="0.800" />
      </Ico>
    </div>
  );
}

function CommandLine() {
  return (
    <div className="absolute bottom-px left-[155px] flex w-[461px] flex-col items-start font-['Liberation_Mono',monospace] text-[8px]">
      <div className="ml-10 flex flex-col items-start gap-[3px] pb-[3px] leading-[10px] whitespace-nowrap">
        <p className="bg-[#3c434c] px-px text-[#aab0b7]">Bieżące ustawienia: Wymaż źródło=Nie Warstwa=Źródłowa OFFSETGAPTYPE=0</p>
        <p className="bg-[#4a5058] px-px text-[#eceef0]">Określ odległość odsunięcia lub [przezPunkt/Wymaż/wArstwa] &lt;20.0000&gt;: *Anulowano*</p>
      </div>
      <div className="flex h-[17px] w-full items-center text-[#d5d9e0]">
        <div className="flex h-full w-[37px] shrink-0 items-center justify-between bg-[#202735] pr-1 pl-px">
          <Ico w={4} h={12}><path d="M0.500 0V12M3 0V12" strokeDasharray="1 1" /></Ico>
          <Btn label="Zamknij wiersz poleceń"><Ico s={6}><path d="M0.500 0.500L5.500 5.500M5.500 0.500L0.500 5.500" /></Ico></Btn>
          <Btn label="Dostosuj"><Ico s={10}><path d="M1 9L6 4" strokeWidth="1.800" /><path d="M9.500 2L8 4H6V2L7.500 0.500" strokeWidth="1.300" /></Ico></Btn>
        </div>
        <label className="flex h-full min-w-0 flex-1 items-center gap-[2px] bg-[#cdced0] px-[2px] text-[#444]">
          <Ico w={12} h={9}><path d="M0.500 1H11.500V8.500H0.500Z" /><path d="M2 4L4 5.500L2 7M5 7H8" /></Ico>
          <Caret />
          <input aria-label="Polecenie" placeholder="Wpisz polecenie" className="min-w-0 flex-1 bg-transparent pl-[2px] italic placeholder:text-[#55585c]" />
          <Ico w={5} h={3}><path d="M0 3H5L2.500 0Z" fill="currentColor" stroke="none" /></Ico>
        </label>
      </div>
    </div>
  );
}

function Canvas() {
  return (
    <div className="relative min-h-0 flex-1 overflow-hidden bg-[#141b26] text-[#dfe3e9]">
      <Drawing />
      <div className="absolute inset-0 flex items-start justify-between">
        <p className="pt-[3px] pl-[2px] text-[8px]">[−][Góra][Model szkieletowy 2D]</p>
        <div className="flex flex-col items-end">
          <div className="mr-2 flex h-[21px] items-center gap-[7px] text-white">
            <Btn label="Minimalizuj rysunek"><Ico s={7}><path d="M0 5.500H7" strokeWidth="2" /></Ico></Btn>
            <Btn label="Przywróć rysunek"><Ico s={7}><path d="M0.700 2.700H4.800V6.300H0.700ZM2.500 2.500V0.700H6.300V4.500H5" strokeWidth="1.300" /></Ico></Btn>
            <Btn label="Zamknij rysunek"><Ico s={6}><path d="M0.500 0.500L5.500 5.500M5.500 0.500L0.500 5.500" strokeWidth="1.500" /></Ico></Btn>
          </div>
          <div className="mt-1 mr-[10px]"><ViewCube /></div>
          <div className="mt-[17px] mr-[3px]"><NavBar /></div>
        </div>
      </div>
      <CommandLine />
    </div>
  );
}

/* ---------- CAD: status bar ---------- */

function Cell({ label, on, children }: Kids & { label: string; on?: boolean }) {
  return (
    <Btn label={label} className={`h-[15px] w-4 ${on ? "bg-[#5183bd] text-white" : ""}`}>
      <Ico s={12}>{children}</Ico>
    </Btn>
  );
}

function CaretCell({ label }: { label: string }) {
  return <Btn label={label} className="h-[15px] w-[11px]"><Caret /></Btn>;
}

function StatusBar() {
  return (
    <footer className="flex h-[19px] items-start justify-between bg-[#1a2130] text-[8px] text-[#c3c8d0]">
      <nav className="flex h-full items-start pl-[9px]">
        <button type="button" className="h-3 w-9 bg-[#2c3547] leading-3 font-bold text-white">Model</button>
        <button type="button" className="h-3 w-[41px] leading-3">Układ1</button>
        <button type="button" className="h-3 w-[38px] leading-3">Układ2</button>
        <Btn label="Nowy układ" className="h-3 w-[22px]"><Ico s={5}><path d="M2.500 0V5M0 2.500H5" /></Ico></Btn>
      </nav>
      <div className="mt-px mr-px flex items-center bg-[#232b39]">
        <button type="button" className="h-[15px] w-[34px] bg-[#2a3242] text-white">MODEL</button>
        <Cell label="Siatka" on><path d="M4 0V12M8 0V12M0 4H12M0 8H12" /></Cell>
        <Cell label="Skok"><path d="M1 2H12M1 6H12M1 10H12" strokeWidth="1.500" strokeDasharray="1.500 2.500" /></Cell>
        <CaretCell label="Ustawienia skoku" />
        <Cell label="Orto"><path d="M2.500 0V9.500H12M2.500 6H6V9.500" /></Cell>
        <Cell label="Śledzenie biegunowe" on><circle cx="5" cy="7" r="4" /><path d="M5 7H12M5 7L11 1M9 3Q11 5 10 8" /></Cell>
        <CaretCell label="Kąty biegunowe" />
        <Cell label="Izometria"><path d="M1 1L11 11M6 1V6L2 10" stroke="#9aa2ae" /></Cell>
        <CaretCell label="Płaszczyzna izometryczna" />
        <Cell label="Śledzenie odniesienia" on><path d="M11 1L1 10.500H12" strokeWidth="1.200" /></Cell>
        <Cell label="Odniesienie do obiektów" on><path d="M3.500 2.500H11.500V10.500H2.500V4" /><rect x="0.500" y="0.500" width="3" height="3" /></Cell>
        <CaretCell label="Ustawienia odniesienia" />
        <Cell label="Szerokość linii" on><path d="M0 1.500H12M0 4.500H7M0 7.500H12M0 10.500H12" strokeWidth="1.600" /></Cell>
        <span className="w-px" />
        <Cell label="Widoczność opisu" on><path d="M6 1L10 11L6 8L2 11Z" fill="currentColor" /><circle cx="10" cy="3" r="1.500" /></Cell>
        <span className="w-px" />
        <Cell label="Autoskala"><path d="M5 2L8 10L5 8L2 11Z" fill="currentColor" /><path d="M9 1V5M7 3H11" /></Cell>
        <Cell label="Opisowe"><path d="M6 1V5L10 11L6 8L2 11L6 5" fill="currentColor" /></Cell>
        <button type="button" className="flex h-[15px] w-[23px] items-center justify-center gap-[2px] text-[#e6e9ee]">1:1 <Caret /></button>
        <Cell label="Obszar roboczy"><circle cx="6" cy="6" r="3" strokeWidth="2" /><path d="M6 0.500V3M6 9V11.500M0.500 6H3M9 6H11.500M2 2L4 4M8 8L10 10M10 2L8 4M4 8L2 10" strokeWidth="1.500" /></Cell>
        <CaretCell label="Lista obszarów" />
        <Cell label="Monitor"><path d="M6 0.500V11.500M0.500 6H11.500" strokeWidth="1.400" /></Cell>
        <span className="w-[2px]" />
        <Cell label="Izolacja obiektów"><path d="M1 1H5V5H1Z" /><circle cx="9.500" cy="5" r="2" /><path d="M5 7.500L7.500 11.500H2.500Z" /></Cell>
        <span className="w-[2px]" />
        <Cell label="Pełny ekran"><path d="M0.500 1.500H11.500V10.500H0.500Z" /><path d="M7 3.500H9.500V6M2.500 6V8.500H5" /></Cell>
        <Cell label="Dostosowanie"><path d="M0.500 2H11.500M0.500 6H11.500M0.500 10H11.500" strokeWidth="1.400" /></Cell>
      </div>
    </footer>
  );
}

function CadWindow() {
  return (
    <section aria-label="Rysunek1.dwg" className="absolute top-1 right-[60px] bottom-[69px] left-[446px] flex flex-col overflow-hidden border-x-2 border-b-2 border-[#2c3644] shadow-[0_0_4px_rgba(0,0,0,0.5)]">
      <CadHeader />
      <Ribbon />
      <FileTabs />
      <Canvas />
      <StatusBar />
      <svg width="9" height="13" viewBox="0 0 9 13" aria-hidden="true" className="absolute top-[71px] left-[184px]">
        <path d="M0.500 0.500V11L3 9L5 12.500L6.500 11.500L5 8.500H8.500Z" fill="#fff" stroke="#222" strokeWidth="0.500" />
      </svg>
    </section>
  );
}

/* ---------- Taskbar ---------- */

function Task({ label, open, active, children }: Kids & { label: string; open?: boolean; active?: boolean }) {
  return (
    <Btn label={label} className="h-full w-[33px]">
      <span className={`flex h-full items-center justify-center border-b-2 ${active ? "w-8 bg-[#3c4763]" : "w-[27px]"} ${open ? "border-[#6aa7e8]" : "border-transparent"}`}>{children}</span>
    </Btn>
  );
}

function Taskbar() {
  return (
    <footer className="flex h-[27px] shrink-0 items-center bg-[#071536] text-white">
      <Btn label="Start" className="h-full w-8">
        <Ico s={11}><path d="M0 1.500L5 1V5.200H0ZM5.700 0.900L11 0V5.200H5.700ZM0 5.800H5V10L0 9.500ZM5.700 5.800H11V11L5.700 10.200Z" fill="#fff" stroke="none" /></Ico>
      </Btn>
      <label className="flex h-[27px] w-[229px] items-center gap-[7px] bg-white px-2 text-[#222]">
        <Ico s={12}><circle cx="7.500" cy="4.500" r="3.800" /><path d="M5 7.500L0.500 11.500" strokeWidth="1.200" /></Ico>
        <input aria-label="Wyszukiwanie" placeholder="Wpisz tu wyszukiwane słowa" className="min-w-0 flex-1 text-[10px] placeholder:text-[#333]" />
      </label>
      <Task label="Widok zadań"><Ico w={12} h={12}><path d="M0 1.500H8M0 10.500H8M1.500 3.500H7V8.500H1.500ZM10.500 0V3M10.500 5V7M10.500 9V12" /></Ico></Task>
      <Task label="Chrome" open>
        <Ico s={15}>
          <g stroke="none">
            <path d="M7.500 7.500L1 3.750A7.500 7.500 0 0 1 14 3.750Z" fill="#e0443a" />
            <path d="M7.500 7.500L14 3.750A7.500 7.500 0 0 1 7.500 15Z" fill="#f7c934" />
            <path d="M7.500 7.500L7.500 15A7.500 7.500 0 0 1 1 3.750Z" fill="#2fa455" />
            <circle cx="7.500" cy="7.500" r="3.600" fill="#fff" /><circle cx="7.500" cy="7.500" r="2.700" fill="#4a87ee" />
          </g>
        </Ico>
      </Task>
      <Task label="Kalkulator"><Ico w={12} h={15}><rect width="12" height="15" fill="#fff" stroke="none" /><path d="M2 3H10" stroke="#071536" strokeWidth="2" /><path d="M2 7.500H11M2 10H11M2 12.500H11" stroke="#071536" strokeWidth="1.400" strokeDasharray="1.500 1.500" /></Ico></Task>
      <Task label="Word"><Ico s={15}><path d="M3 0H15V13L12 15H3Z" fill="#dfe9f8" stroke="none" /><path d="M6 9.500H13M6 12H12M11 3.500H14M11 6.500H14" stroke="#4668b0" /><path d="M0 2H10V10H0Z" fill="#3456a8" stroke="none" /><path d="M1.500 4L3.200 8L5 4.500L6.800 8L8.500 4" stroke="#fff" /></Ico></Task>
      <Task label="Eksplorator plików"><Ico w={14} h={13}><path d="M0 0H5L6 1.500H14V13H0Z" fill="#f6c944" stroke="none" /><path d="M0 4H14V13H0Z" fill="#fbdc79" stroke="none" /><path d="M2.500 13V7.500H11.500V13H9V10H5V13Z" fill="#3f8fd0" stroke="none" /></Ico></Task>
      <Task label="Edytor wideo"><Ico s={16}><rect x="0.500" y="0.500" width="15" height="15" fill="#0c0f14" stroke="#178a96" /><path d="M3 4V12M13 4V12" stroke="#e6e6e6" strokeWidth="2" strokeDasharray="1.500 1" /><path d="M4.500 5.500H11.500V10.500H4.500Z" stroke="#e6e6e6" /></Ico></Task>
      <Task label="AutoCAD" open active><Ico s={16}><rect width="16" height="16" fill="#f2f2f2" stroke="none" /><path d="M6.500 2H10L14 13L10.500 14L9.500 11H6L5 14H2.500Z" fill="#c21f2b" stroke="none" /><path d="M8 5L9 9H6.800Z" fill="#f2f2f2" stroke="none" /></Ico></Task>
      <Task label="Zdjęcia" open><Ico s={15}><rect width="15" height="15" fill="#1b7fe0" stroke="none" /><path d="M0 15V9L5 4L15 14V15Z" fill="#0d3f8c" stroke="none" /><path d="M7 15L11 10L15 14V15Z" fill="#7cc4f5" stroke="none" /><circle cx="11.500" cy="3.500" r="1.200" fill="#fff" stroke="none" /></Ico></Task>
      <div className="ml-auto flex h-full items-center">
        <Btn label="Ukryte ikony" className="w-4"><Ico w={8} h={5}><path d="M0.500 4.500L4 1L7.500 4.500" strokeWidth="1.200" /></Ico></Btn>
        <Btn label="Sieć" className="w-4"><Ico s={9}><path d="M1 9Q1 1 9 1M3 9Q3.500 3.500 9 3.500M5 9Q5.500 6 9 6M7 9L9 8" strokeWidth="0.900" stroke="#c5cad6" /></Ico></Btn>
        <Btn label="Głośność" className="w-4"><Ico w={12} h={10}><path d="M0.500 3.500H2.500L5 1V9L2.500 6.500H0.500ZM6.500 3.500Q7.500 5 6.500 6.500M8.300 2Q10 5 8.300 8M10 0.800Q12.500 5 10 9.200" strokeWidth="0.900" /></Ico></Btn>
        <time dateTime="2020-04-19T17:46" className="w-[44px] text-center text-[8px] leading-3">17:46<br />19.04.2020</time>
        <Btn label="Powiadomienia" className="relative h-full w-[28px]">
          <Ico w={11} h={11}><path d="M0 0H11V8.500H5L3 11V8.500H0Z" fill="#fff" stroke="none" /><path d="M2 2.500H9M2 4.500H9M2 6.500H6" stroke="#071536" strokeWidth="0.900" /></Ico>
          <span className="absolute right-[3px] bottom-[4px] flex h-[10px] w-[10px] items-center justify-center rounded-full border border-[#9aa2b4] bg-[#2a3550] text-[7px] leading-none">7</span>
        </Btn>
        <span className="mr-[2px] ml-1 h-full w-px bg-[#3a4868]" />
      </div>
    </footer>
  );
}

export default function App() {
  return (
    <div className="relative flex h-screen min-h-[640px] flex-col overflow-hidden bg-[#002fbc] font-['Open_Sans','Noto_Sans',sans-serif]">
      <Wallpaper />
      <main className="relative min-h-0 flex-1">
        <DesktopIcons />
        <PhotosWindow />
        <CadWindow />
      </main>
      <div className="relative"><Taskbar /></div>
    </div>
  );
}
